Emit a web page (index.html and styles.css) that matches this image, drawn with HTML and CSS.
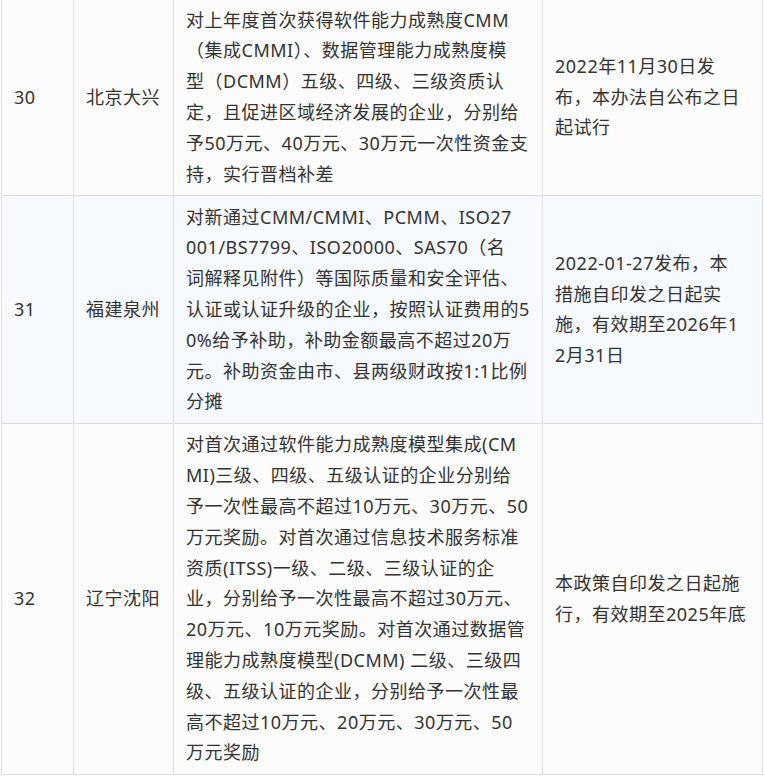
FILE: index.html
```
<!DOCTYPE html>
<html lang="zh-CN">
<head>
<meta charset="utf-8">
<title>政策表</title>
<link rel="stylesheet" href="styles.css">
</head>
<body>
<div class="wrap">
<table class="policy">
  <colgroup>
    <col class="c-no">
    <col class="c-region">
    <col class="c-content">
    <col class="c-date">
  </colgroup>
  <tbody>
    <tr class="row">
      <td class="no">30</td>
      <td class="region">北京大兴</td>
      <td class="text">对上年度首次获得软件能力成熟度CMM<br>（集成CMMI）、数据管理能力成熟度模<br>型（DCMM）五级、四级、三级资质认<br>定，且促进区域经济发展的企业，分别给<br>予50万元、40万元、30万元一次性资金支<br>持，实行晋档补差</td>
      <td class="date">2022年11月30日发<br>布，本办法自公布之日<br>起试行</td>
    </tr>
    <tr class="row alt">
      <td class="no">31</td>
      <td class="region">福建泉州</td>
      <td class="text">对新通过CMM/CMMI、PCMM、ISO27<br>001/BS7799、ISO20000、SAS70（名<br>词解释见附件）等国际质量和安全评估、<br>认证或认证升级的企业，按照认证费用的5<br>0%给予补助，补助金额最高不超过20万<br>元。补助资金由市、县两级财政按1:1比例<br>分摊</td>
      <td class="date">2022-01-27发布，本<br>措施自印发之日起实<br>施，有效期至2026年1<br>2月31日</td>
    </tr>
    <tr class="row">
      <td class="no">32</td>
      <td class="region">辽宁沈阳</td>
      <td class="text">对首次通过软件能力成熟度模型集成(CM<br>MI)三级、四级、五级认证的企业分别给<br>予一次性最高不超过10万元、30万元、50<br>万元奖励。对首次通过信息技术服务标准<br>资质(ITSS)一级、二级、三级认证的企<br>业，分别给予一次性最高不超过30万元、<br>20万元、10万元奖励。对首次通过数据管<br>理能力成熟度模型(DCMM) 二级、三级四<br>级、五级认证的企业，分别给予一次性最<br>高不超过10万元、20万元、30万元、50<br>万元奖励</td>
      <td class="date">本政策自印发之日起施<br>行，有效期至2025年底</td>
    </tr>
  </tbody>
</table>
</div>
</body>
</html>
```

FILE: styles.css
```
html, body {
  margin: 0;
  padding: 0;
  background: #ffffff;
}

.wrap {
  margin: -2px 0 0 1px;
}

.policy {
  border-collapse: collapse;
  table-layout: fixed;
  width: 761px;
  font-family: "Noto Sans", "Noto Sans CJK SC", sans-serif;
  font-size: 18px;
  letter-spacing: 0.5px;
  line-height: 30.8px;
  color: #333333;
}

.c-no { width: 72px; }
.c-region { width: 100px; }
.c-content { width: 369px; }
.c-date { width: 220px; }

.policy td {
  border: 1px solid #dddddd;
  padding: 5.6px 12px;
  vertical-align: middle;
  white-space: nowrap;
  text-align: left;
}

.row { background: #fcfcfc; }
.row.alt { background: #f6f9fe; }
```
